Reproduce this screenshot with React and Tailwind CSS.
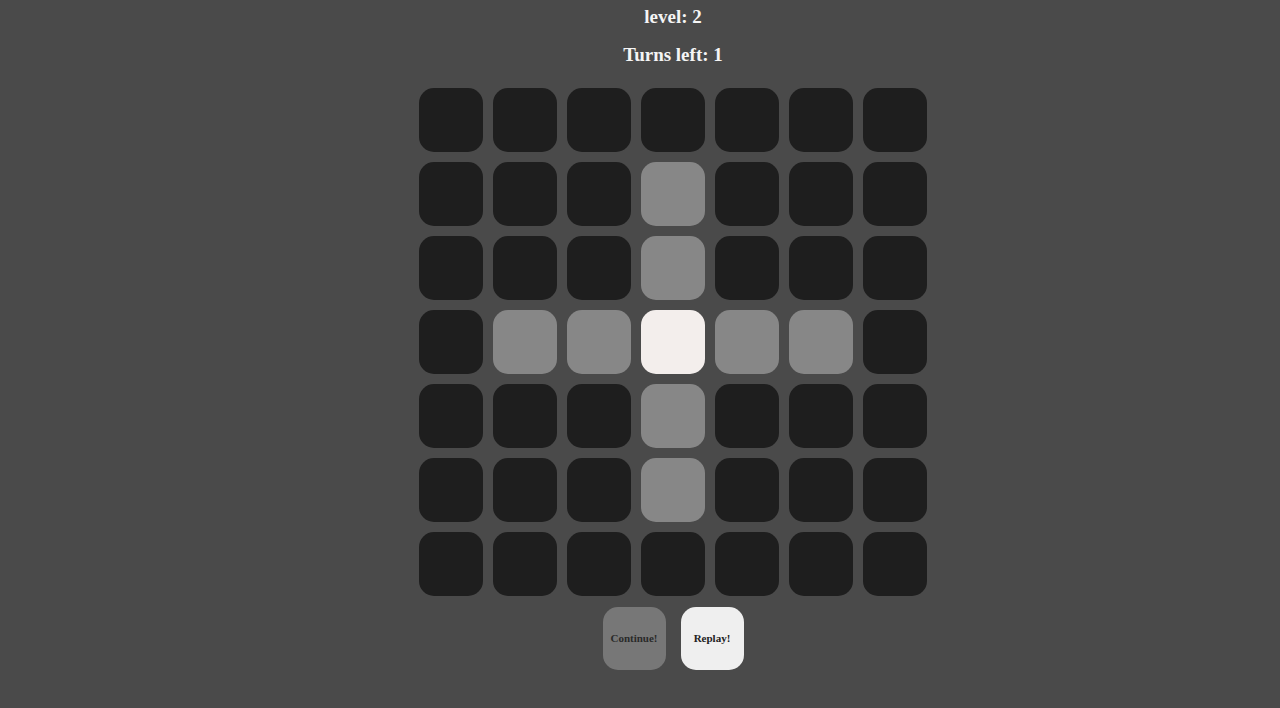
import React from "react";

const SIZE = 7;
// lit cells: center row/col cross
function cellColor(r, c) {
	if (r === 3 && c === 3) return "bg-[#f3eeec]";
	if (r === 3 && c >= 1 && c <= 5) return "bg-[#878787]";
	if (c === 3 && r >= 1 && r <= 5) return "bg-[#878787]";
	return "bg-[#1e1e1e]";
}

function App() {
	const cells = [];
	for (let r = 0; r < SIZE; r++) {
		for (let c = 0; c < SIZE; c++) {
			cells.push(
				<div
					key={`${r}-${c}`}
					className={`w-[64px] h-[64px] rounded-[15px] ${cellColor(r, c)}`}
				/>
			);
		}
	}

	return (
		<div
			className="min-h-screen bg-[#4a4a4a] pl-[66px] flex flex-col items-center text-[#f5f5f5]"
			style={{ fontFamily: '"Liberation Serif", "DejaVu Serif", serif' }}
		>
			<div className="mt-[5px] h-6 leading-6 text-[19px] font-bold">level: 2</div>
			<div className="mt-[14px] h-6 leading-6 text-[19px] font-bold">Turns left: 1</div>
			<div className="mt-[21px] grid grid-cols-7 gap-[10px]">{cells}</div>
			<div className="mt-[11px] flex gap-[15px]">
				<button className="w-[63px] h-[63px] rounded-[15px] bg-[#777777] text-[#2a2a2a] text-[11px] font-bold">
					Continue!
				</button>
				<button className="w-[63px] h-[63px] rounded-[15px] bg-[#efefef] text-[#222222] text-[11px] font-bold">
					Replay!
				</button>
			</div>
		</div>
	);
}

export default App;
